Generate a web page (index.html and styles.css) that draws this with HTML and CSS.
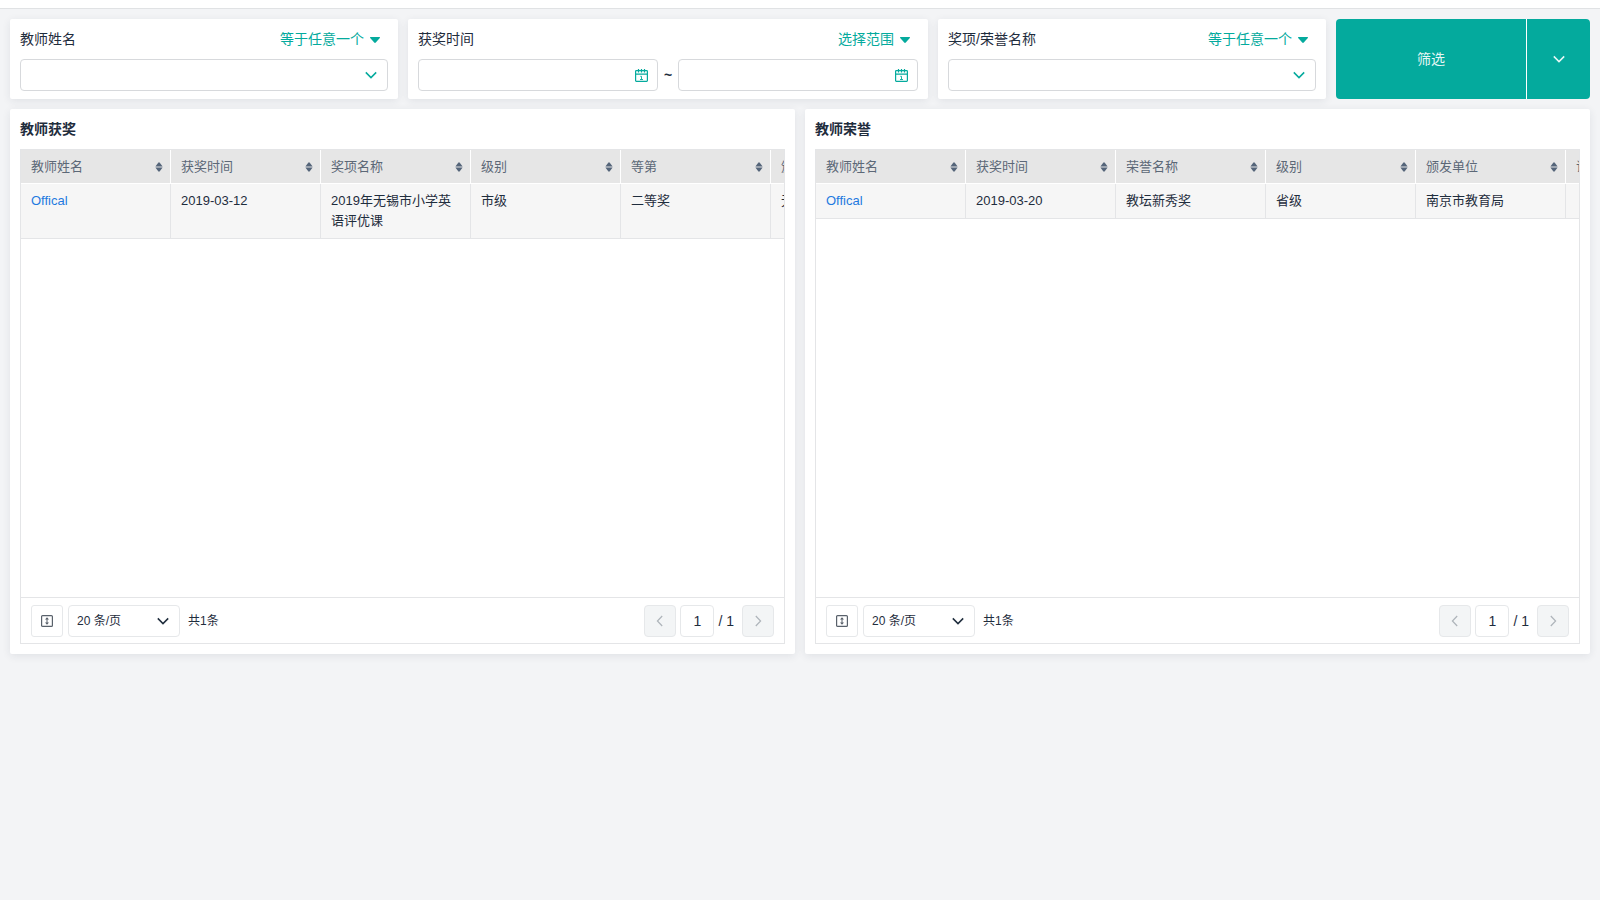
FILE: index.html
```html
<!DOCTYPE html>
<html lang="zh-CN">
<head>
<meta charset="utf-8">
<title>教师获奖与荣誉</title>
<link rel="stylesheet" href="styles.css">
</head>
<body>
<svg class="defs" aria-hidden="true">
  <symbol id="chevron" viewBox="0 0 12 8"><path d="M.8 1.4l5.2 5.2 5.2-5.2" fill="none" stroke="currentColor" stroke-width="1.5"/></symbol>
  <symbol id="left" viewBox="0 0 8 12"><path d="M6.2 1L1.4 6l4.8 5" fill="none" stroke="currentColor" stroke-width="1.2"/></symbol>
  <symbol id="right" viewBox="0 0 8 12"><path d="M1.8 1l4.8 5-4.8 5" fill="none" stroke="currentColor" stroke-width="1.2"/></symbol>
  <symbol id="caret" viewBox="0 0 10 6"><path d="M.5 0h9q.8.3.3 1L5.8 5.6q-.8.7-1.6 0L.2 1q-.5-.7.3-1z" fill="currentColor"/></symbol>
  <symbol id="sort" viewBox="0 0 8 10"><path d="M.4 4.5L3.2.8q.8-.9 1.6 0l2.8 3.7zM.4 5.5l2.8 3.7q.8.9 1.6 0l2.8-3.7z" fill="currentColor"/></symbol>
  <symbol id="calendar" viewBox="0 0 13 13"><path d="M1.3 1.7h10.4q.7 0 .7.7v9.2q0 .7-.7.7H1.3q-.7 0-.7-.7V2.4q0-.7.7-.7zM.6 5.2h11.8" fill="none" stroke="currentColor" stroke-width="1.2"/><path d="M3.5 0v3.4M6.5 0v3.4M9.5 0v3.4" fill="none" stroke="currentColor" stroke-width="1.2"/><path d="M5.3 7.3h1.2v3.2M5 10.5h3" fill="none" stroke="currentColor" stroke-width=".9"/></symbol>
  <symbol id="height" viewBox="0 0 12 12"><path d="M1.6.6h8.8q1 0 1 1v8.8q0 1-1 1H1.6q-1 0-1-1V1.6q0-1 1-1z" fill="none" stroke="currentColor" stroke-width="1.2"/><path d="M6 3v6" stroke="currentColor"/><path d="M6 2.2l2 2.2H4zM6 9.8l2-2.2H4z" fill="currentColor"/></symbol>
</svg>

<header class="topbar"></header>
<main class="page">
  <form class="filters">
    <section class="card filter">
      <div class="filter-head">
        <label for="teacher">教师姓名</label>
        <button type="button" class="operator">等于任意一个<svg class="caret"><use href="#caret"/></svg></button>
      </div>
      <div class="field">
        <select id="teacher" class="control"><option></option></select>
        <svg class="chevron"><use href="#chevron"/></svg>
      </div>
    </section>
    <section class="card filter">
      <div class="filter-head">
        <label for="date-from">获奖时间</label>
        <button type="button" class="operator">选择范围<svg class="caret"><use href="#caret"/></svg></button>
      </div>
      <div class="range">
        <div class="field">
          <input id="date-from" class="control" type="text">
          <svg class="calendar"><use href="#calendar"/></svg>
        </div>
        <span class="tilde">~</span>
        <div class="field">
          <input class="control" type="text" aria-label="获奖时间止">
          <svg class="calendar"><use href="#calendar"/></svg>
        </div>
      </div>
    </section>
    <section class="card filter">
      <div class="filter-head">
        <label for="award">奖项/荣誉名称</label>
        <button type="button" class="operator">等于任意一个<svg class="caret"><use href="#caret"/></svg></button>
      </div>
      <div class="field">
        <select id="award" class="control"><option></option></select>
        <svg class="chevron"><use href="#chevron"/></svg>
      </div>
    </section>
    <div class="submit">
      <button type="button" class="submit-main">筛选</button>
      <button type="button" class="submit-more" aria-label="更多"><svg class="icon-chevron"><use href="#chevron"/></svg></button>
    </div>
  </form>

  <div class="panels">
    <section class="card panel">
      <h2 class="title">教师获奖</h2>
      <div class="grid">
        <div class="scroll">
          <table class="table">
            <thead><tr>
              <th><div class="th">教师姓名<svg class="sort"><use href="#sort"/></svg></div></th>
              <th><div class="th">获奖时间<svg class="sort"><use href="#sort"/></svg></div></th>
              <th><div class="th">奖项名称<svg class="sort"><use href="#sort"/></svg></div></th>
              <th><div class="th">级别<svg class="sort"><use href="#sort"/></svg></div></th>
              <th><div class="th">等第<svg class="sort"><use href="#sort"/></svg></div></th>
              <th><div class="th">颁发单位<svg class="sort"><use href="#sort"/></svg></div></th>
            </tr></thead>
            <tbody><tr>
              <td><a href="#">Offical</a></td><td>2019-03-12</td><td>2019年无锡市小学英语评优课</td><td>市级</td><td>二等奖</td><td>无锡市</td>
            </tr></tbody>
          </table>
        </div>
        <div class="pager">
          <button type="button" class="square plain" aria-label="行高"><svg class="height"><use href="#height"/></svg></button>
          <div class="size">
            <select class="size-select" aria-label="每页条数"><option>20 条/页</option></select>
            <svg class="chevron"><use href="#chevron"/></svg>
          </div>
          <span class="total">共1条</span>
          <button type="button" class="square" aria-label="上一页" disabled><svg class="arrow"><use href="#left"/></svg></button>
          <input class="page-no" type="text" value="1" aria-label="页码">
          <span class="pages">/ 1</span>
          <button type="button" class="square" aria-label="下一页" disabled><svg class="arrow"><use href="#right"/></svg></button>
        </div>
      </div>
    </section>

    <section class="card panel">
      <h2 class="title">教师荣誉</h2>
      <div class="grid">
        <div class="scroll">
          <table class="table">
            <thead><tr>
              <th><div class="th">教师姓名<svg class="sort"><use href="#sort"/></svg></div></th>
              <th><div class="th">获奖时间<svg class="sort"><use href="#sort"/></svg></div></th>
              <th><div class="th">荣誉名称<svg class="sort"><use href="#sort"/></svg></div></th>
              <th><div class="th">级别<svg class="sort"><use href="#sort"/></svg></div></th>
              <th><div class="th">颁发单位<svg class="sort"><use href="#sort"/></svg></div></th>
              <th><div class="th">证书<svg class="sort"><use href="#sort"/></svg></div></th>
            </tr></thead>
            <tbody><tr>
              <td><a href="#">Offical</a></td><td>2019-03-20</td><td>教坛新秀奖</td><td>省级</td><td>南京市教育局</td><td></td>
            </tr></tbody>
          </table>
        </div>
        <div class="pager">
          <button type="button" class="square plain" aria-label="行高"><svg class="height"><use href="#height"/></svg></button>
          <div class="size">
            <select class="size-select" aria-label="每页条数"><option>20 条/页</option></select>
            <svg class="chevron"><use href="#chevron"/></svg>
          </div>
          <span class="total">共1条</span>
          <button type="button" class="square" aria-label="上一页" disabled><svg class="arrow"><use href="#left"/></svg></button>
          <input class="page-no" type="text" value="1" aria-label="页码">
          <span class="pages">/ 1</span>
          <button type="button" class="square" aria-label="下一页" disabled><svg class="arrow"><use href="#right"/></svg></button>
        </div>
      </div>
    </section>
  </div>
</main>
</body>
</html>
```
FILE: styles.css
```css
* { box-sizing: border-box; }

body {
  margin: 0;
  background: #f3f4f6;
  color: #1f2d3d;
  font: 14px/20px "Liberation Sans", "Noto Sans CJK SC", sans-serif;
}

button, input, select {
  margin: 0;
  padding: 0;
  border: 0;
  background: none;
  color: inherit;
  font: inherit;
}

svg { display: block; flex: none; }
.defs { position: absolute; width: 0; height: 0; }

.topbar {
  height: 9px;
  background: #fff;
  border-bottom: 1px solid #e0e2e4;
}

.page { padding: 10px; }

.card {
  background: #fff;
  border-radius: 2px;
  box-shadow: 0 2px 8px rgba(31, 45, 61, 0.09);
}

/* Filters */
.filters {
  display: grid;
  grid-template-columns: 388fr 520fr 388fr 254fr;
  gap: 10px;
  margin-bottom: 10px;
}

.filter { padding: 10px 10px 8px; }

.filter-head {
  display: flex;
  justify-content: space-between;
  padding-right: 8px;
  margin-bottom: 10px;
}

.operator {
  display: flex;
  align-items: center;
  gap: 6px;
  color: #04aa9d;
}

.caret { width: 10px; height: 6px; margin-top: 2px; }

.field { position: relative; flex: 1; color: #04aa9d; }

.control {
  display: block;
  width: 100%;
  height: 32px;
  padding: 0 32px 0 10px;
  border: 1px solid #d7d9dc;
  border-radius: 4px;
  background: #fff;
  color: #1f2d3d;
  appearance: none;
}

.chevron {
  position: absolute;
  top: 12px;
  right: 11px;
  width: 12px;
  height: 8px;
  pointer-events: none;
}

.calendar {
  position: absolute;
  top: 10px;
  right: 10px;
  width: 13px;
  height: 13px;
  pointer-events: none;
}

.range { display: flex; align-items: center; }
.tilde { width: 20px; text-align: center; font-weight: 700; }

.submit {
  display: flex;
  gap: 1px;
  border-radius: 4px;
  overflow: hidden;
  color: #e6f7f5;
  background: #fff;
}

.submit-main { flex: 1; background: #04aa9d; }

.submit-more {
  display: flex;
  align-items: center;
  justify-content: center;
  width: 63px;
  background: #04aa9d;
}

.icon-chevron { width: 12px; height: 8px; }

/* Panels */
.panels {
  display: grid;
  grid-template-columns: repeat(2, minmax(0, 1fr));
  gap: 10px;
}

.panel { padding: 10px; }

.title {
  margin: 0 0 10px;
  font-size: 14px;
  line-height: 20px;
  font-weight: 700;
}

.grid { border: 1px solid #e4e5e7; }

.scroll { min-height: 447px; overflow: hidden; }

.table {
  width: 900px;
  table-layout: fixed;
  border-collapse: separate;
  border-spacing: 0;
  font-size: 13px;
}

.table th {
  padding: 7px 7px 6px 10px;
  background: #e6e6e6;
  border-right: 1px solid #fff;
  border-bottom: 1px solid #fff;
  color: #5c6877;
  font-weight: 400;
  text-align: left;
}

.th {
  display: flex;
  align-items: center;
  justify-content: space-between;
}

.sort { width: 8px; height: 10px; color: #55657a; }

.table td {
  padding: 7px 10px;
  background: #f6f6f6;
  border-right: 1px solid #e4e5e7;
  border-bottom: 1px solid #e4e5e7;
  vertical-align: top;
}

.table a { color: #1f7ae0; text-decoration: none; }

/* Pager */
.pager {
  display: flex;
  align-items: center;
  padding: 7px 10px 6px;
  border-top: 1px solid #e4e5e7;
}

.square {
  display: flex;
  align-items: center;
  justify-content: center;
  width: 32px;
  height: 32px;
  border: 1px solid #e6e8ea;
  border-radius: 4px;
  background: #f3f5f6;
  color: #aeb4ba;
}

.plain { background: #fff; color: #59616b; border-radius: 3px; }
.height { width: 12px; height: 12px; }
.arrow { width: 8px; height: 12px; }

.size { position: relative; width: 112px; margin: 0 8px 0 5px; }

.size-select {
  display: block;
  width: 100%;
  height: 32px;
  padding: 0 28px 0 8px;
  border: 1px solid #e6e8ea;
  border-radius: 4px;
  background: #fff;
  font-size: 12px;
  appearance: none;
}

.total { margin-right: auto; font-size: 12px; }

.page-no {
  width: 34px;
  height: 32px;
  margin: 0 4px;
  border: 1px solid #e6e8ea;
  border-radius: 4px;
  text-align: center;
}

.pages { margin-right: 8px; }
```
